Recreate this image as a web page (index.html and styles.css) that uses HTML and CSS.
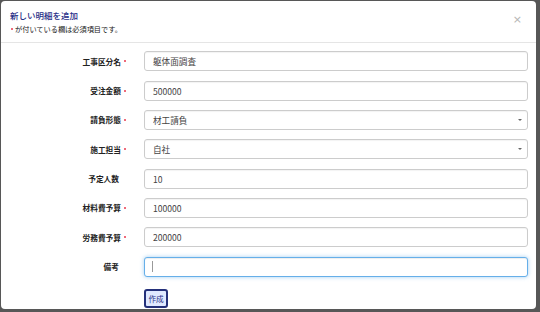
FILE: index.html
```html
<!DOCTYPE html>
<html lang="ja">
<head>
<meta charset="UTF-8" />
<title>新しい明細を追加</title>
<link rel="stylesheet" href="styles.css">
</head>
<body>

<div class="modal">
  <div class="modal-header">
    <div>
      <h4 class="modal-title">新しい明細を追加</h4>
      <p class="modal-note"><span class="req"></span>が付いている欄は必須項目です。</p>
    </div>
    <button type="button" class="close" aria-label="Close">&times;</button>
  </div>

  <form class="modal-body">
    <label class="form-label" for="kubun">工事区分名<span class="req"></span></label>
    <input class="form-control" id="kubun" type="text" value="躯体面調査" />

    <label class="form-label" for="amount">受注金額<span class="req"></span></label>
    <input class="form-control" id="amount" type="text" value="500000" />

    <label class="form-label" for="keitai">請負形態<span class="req"></span></label>
    <div class="select-wrap">
      <select class="form-control" id="keitai">
        <option>材工請負</option>
        <option>手間請負</option>
      </select>
    </div>

    <label class="form-label" for="tanto">施工担当<span class="req"></span></label>
    <div class="select-wrap">
      <select class="form-control" id="tanto">
        <option>自社</option>
        <option>外注</option>
      </select>
    </div>

    <label class="form-label no-req" for="ninzu">予定人数</label>
    <input class="form-control" id="ninzu" type="text" value="10" />

    <label class="form-label" for="zairyo">材料費予算<span class="req"></span></label>
    <input class="form-control" id="zairyo" type="text" value="100000" />

    <label class="form-label" for="romu">労務費予算<span class="req"></span></label>
    <input class="form-control" id="romu" type="text" value="200000" />

    <label class="form-label no-req" for="biko">備考</label>
    <div class="focus-wrap">
      <input class="form-control focused" id="biko" type="text" value="" />
      <span class="caret"></span>
    </div>

    <div></div>
    <div class="actions">
      <button type="submit" class="btn-create">作成</button>
    </div>
  </form>
</div>

</body>
</html>
```

FILE: styles.css
```css
* {
  box-sizing: border-box;
}
body {
  margin: 0;
  background: #575757;
  font-family: "Noto Sans CJK JP", "Noto Sans", sans-serif;
  color: #333;
}
.modal {
  margin: 1px 0 0 1px;
  width: 535px;
  height: 308px;
  background: #fff;
  border-radius: 4px;
  overflow: hidden;
}
.modal-header {
  display: flex;
  justify-content: space-between;
  align-items: flex-start;
  height: 42px;
  padding: 8px 14px 0 9px;
  border-bottom: 1px solid #e5e5e5;
}
.modal-title {
  margin: 0;
  font-size: 8.5px;
  line-height: 12px;
  font-weight: 500;
  color: #1f2d86;
}
.modal-note {
  margin: 3px 0 0;
  font-size: 7.2px;
  line-height: 10px;
  color: #222;
  display: flex;
  align-items: center;
}
.modal-note .req {
  margin: 0 2px 0 1px;
}
.req {
  display: inline-block;
  width: 2px;
  height: 2px;
  border-radius: 50%;
  background: #e8384f;
}
.close {
  margin-top: 5px;
  padding: 0;
  border: none;
  background: none;
  font-family: "DejaVu Sans", sans-serif;
  font-size: 11px;
  line-height: 12px;
  color: #b5b5b5;
}

.modal-body {
  display: grid;
  grid-template-columns: 127px 384px;
  grid-auto-rows: 20px;
  column-gap: 16px;
  row-gap: 9.33px;
  padding-top: 8.3px;
}
.form-label {
  display: flex;
  justify-content: flex-end;
  align-items: center;
  font-size: 7.7px;
  font-weight: bold;
  color: #222;
}
.form-label .req {
  margin: 0 2px 0 3px;
}
.form-label.no-req {
  padding-right: 9px;
}
.form-control {
  display: block;
  width: 100%;
  height: 20px;
  margin: 0;
  padding: 0 8px;
  font-family: "Noto Sans CJK JP", "Noto Sans", sans-serif;
  font-size: 8.6px;
  color: #444;
  background: #fff;
  border: 1px solid #ccc;
  border-radius: 3px;
  box-shadow: inset 0 1px 1px rgba(0,0,0,0.05);
  outline: none;
}
select.form-control {
  appearance: none;
  -webkit-appearance: none;
}
.select-wrap,
.focus-wrap {
  position: relative;
}
.select-wrap::after {
  content: "";
  position: absolute;
  right: 6px;
  top: 9px;
  border-left: 2px solid transparent;
  border-right: 2px solid transparent;
  border-top: 2px solid #666;
}
.form-control.focused {
  border-color: #66afe9;
  box-shadow: inset 0 1px 1px rgba(0,0,0,0.07), 0 0 4px rgba(102,175,233,0.6);
}
.caret {
  position: absolute;
  left: 8px;
  top: 4px;
  width: 1px;
  height: 11px;
  background: #999;
}

.actions {
  padding-top: 2.7px;
}
.btn-create {
  display: block;
  width: 24px;
  height: 19px;
  padding: 0;
  font-family: "Noto Sans CJK JP", "Noto Sans", sans-serif;
  font-size: 7.6px;
  color: #1f2d86;
  background: #dfe8ff;
  border: 2px solid #24307a;
  border-radius: 3px;
}
```
